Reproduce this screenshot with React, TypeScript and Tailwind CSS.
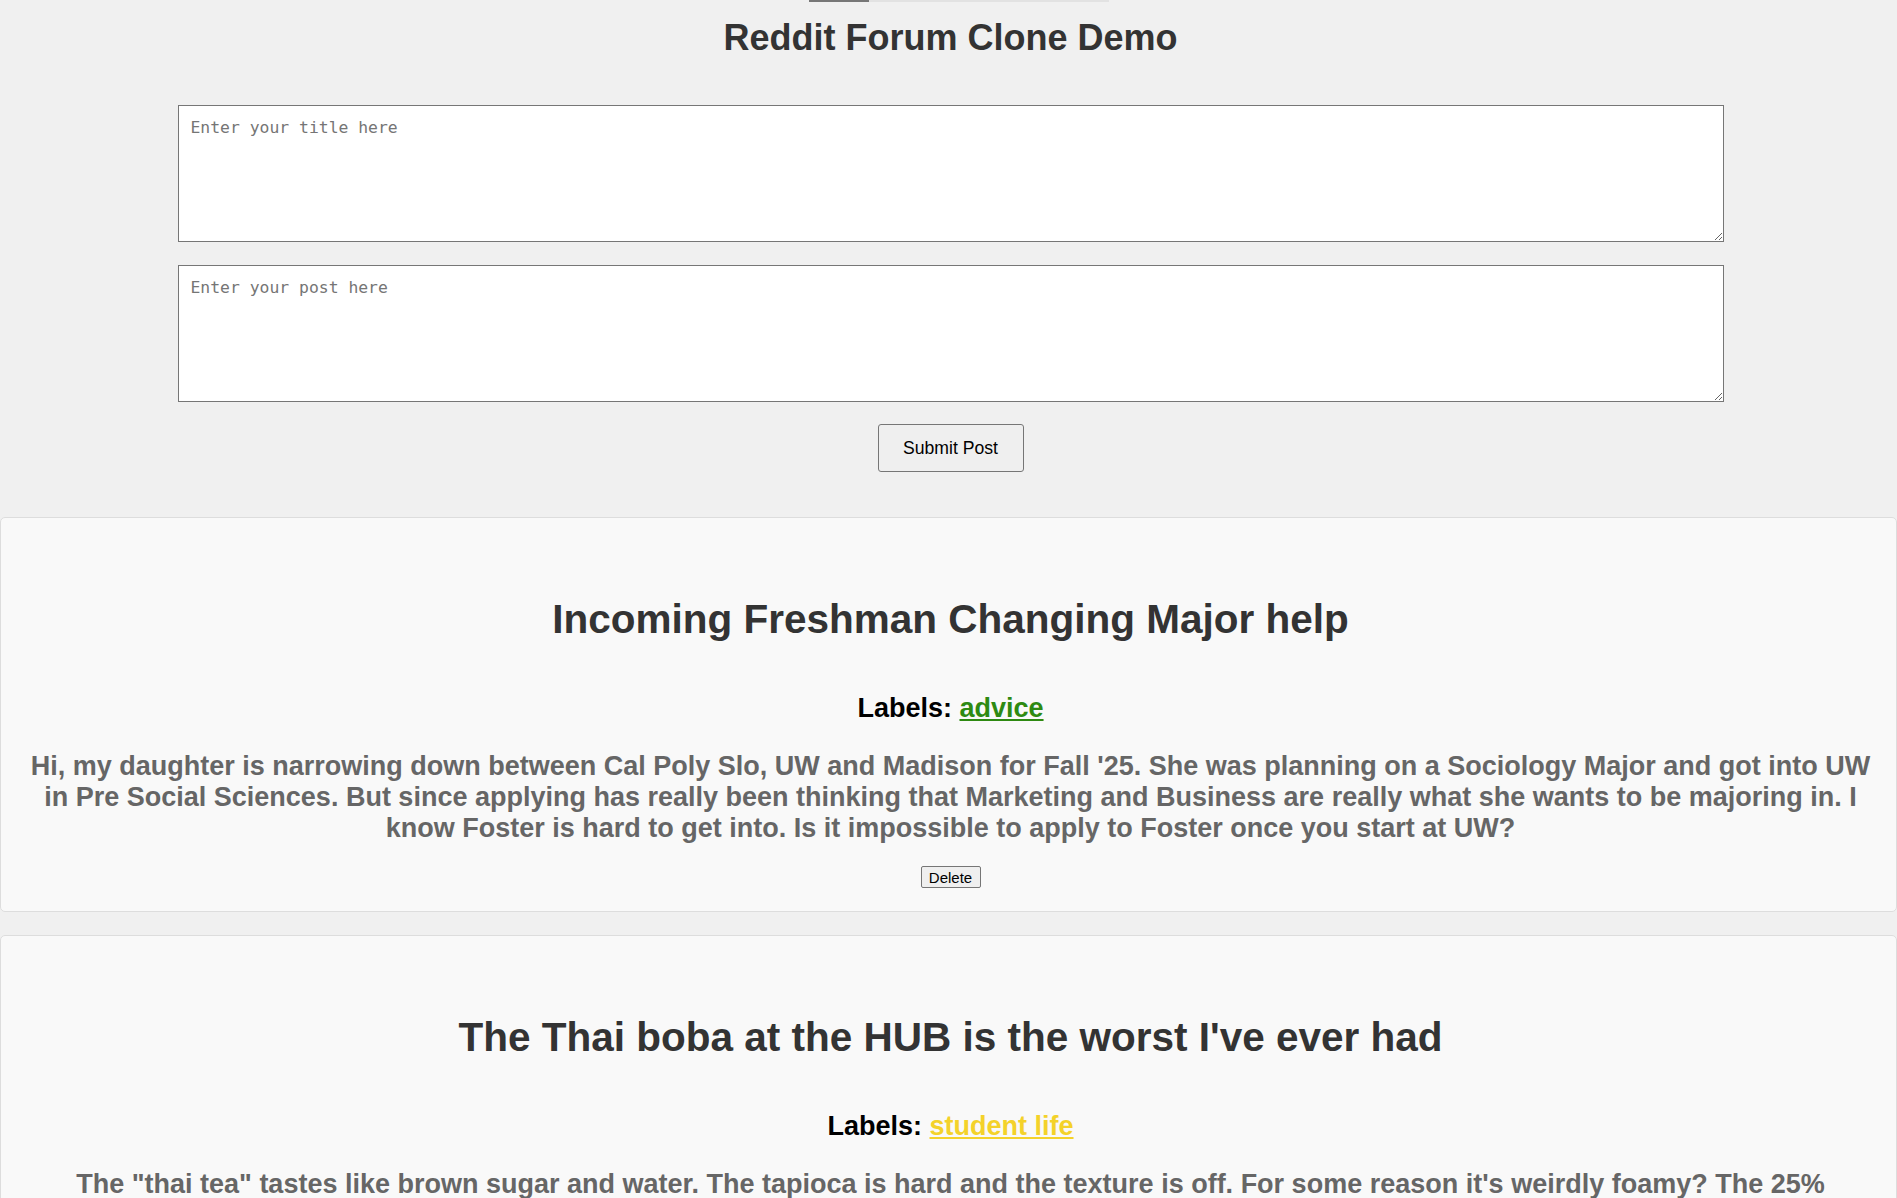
import { useState } from 'react';

interface Post {
  id: number;
  title: string;
  label: string;
  labelColor: string;
  body: string;
}

const INITIAL_POSTS: Post[] = [
  {
    id: 1,
    title: 'Incoming Freshman Changing Major help',
    label: 'advice',
    labelColor: 'text-[#2e8a12]',
    body: "Hi, my daughter is narrowing down between Cal Poly Slo, UW and Madison for Fall '25. She was planning on a Sociology Major and got into UW in Pre Social Sciences. But since applying has really been thinking that Marketing and Business are really what she wants to be majoring in. I know Foster is hard to get into. Is it impossible to apply to Foster once you start at UW?",
  },
  {
    id: 2,
    title: "The Thai boba at the HUB is the worst I've ever had",
    label: 'student life',
    labelColor: 'text-[#f4d22a]',
    body: 'The "thai tea" tastes like brown sugar and water. The tapioca is hard and the texture is off. For some reason it\'s weirdly foamy? The 25% sweetness option still tastes like 100% and I couldn\'t even finish half of it. Save your money and walk down the Ave instead.',
  },
];

function PostCard({ post, onDelete }: { post: Post; onDelete: (id: number) => void }) {
  return (
    <div className="border border-[#dddddd] rounded-[5px] bg-[#f9f9f9] pt-[78px] pb-[23px] pl-[26px] pr-[22px] text-center">
      <h2 className="text-[40.5px] leading-[46px] font-bold text-[#333333]">{post.title}</h2>
      <p className="mt-[51px] text-[27px] leading-[31px] font-bold text-black">
        Labels: <a href="#" className={`${post.labelColor} underline`}>{post.label}</a>
      </p>
      <p className="mt-[27px] text-[27px] leading-[31px] font-bold text-[#666666]">{post.body}</p>
      <div className="mt-[22px] flex justify-center">
        <button
          onClick={() => onDelete(post.id)}
          className="w-[60px] h-[22px] text-[15px] leading-none text-black bg-[#efefef] border border-[#767676] rounded-[2px]"
        >
          Delete
        </button>
      </div>
    </div>
  );
}

export default function App() {
  const [posts, setPosts] = useState<Post[]>(INITIAL_POSTS);
  const [title, setTitle] = useState('');
  const [body, setBody] = useState('');

  const submit = () => {
    if (!title.trim()) return;
    setPosts([{ id: Date.now(), title, label: 'general', labelColor: 'text-[#2e8a12]', body }, ...posts]);
    setTitle('');
    setBody('');
  };

  return (
    <div className="min-h-screen bg-[#f0f0f0] font-['Liberation_Sans',Arial,sans-serif]">
      <div className="flex pl-[809px]">
        <div className="w-[60px] h-[2px] bg-[#777777]" />
        <div className="w-[240px] h-[2px] bg-[#e2e2e2]" />
      </div>

      <div className="flex flex-col items-center pl-[4px]">
        <h1 className="mt-[15px] text-[36px] leading-[42px] font-bold text-[#333333]">Reddit Forum Clone Demo</h1>
        <textarea
          value={title}
          onChange={e => setTitle(e.target.value)}
          placeholder="Enter your title here"
          className="mt-[46px] w-[1546px] h-[137px] px-[12px] pt-[10px] bg-white border border-[#767676] font-['DejaVu_Sans_Mono',monospace] text-[16.4px] text-black placeholder:text-[#757575] outline-none"
        />
        <textarea
          value={body}
          onChange={e => setBody(e.target.value)}
          placeholder="Enter your post here"
          className="mt-[23px] w-[1546px] h-[137px] px-[12px] pt-[10px] bg-white border border-[#767676] font-['DejaVu_Sans_Mono',monospace] text-[16.4px] text-black placeholder:text-[#757575] outline-none"
        />
        <button
          onClick={submit}
          className="mt-[22px] w-[146px] h-[48px] text-[17.6px] text-black bg-[#efefef] border border-[#767676] rounded-[3px]"
        >
          Submit Post
        </button>
      </div>

      <div className="mt-[45px] flex flex-col gap-[23px]">
        {posts.map(p => (
          <PostCard key={p.id} post={p} onDelete={id => setPosts(posts.filter(x => x.id !== id))} />
        ))}
      </div>
    </div>
  );
}
